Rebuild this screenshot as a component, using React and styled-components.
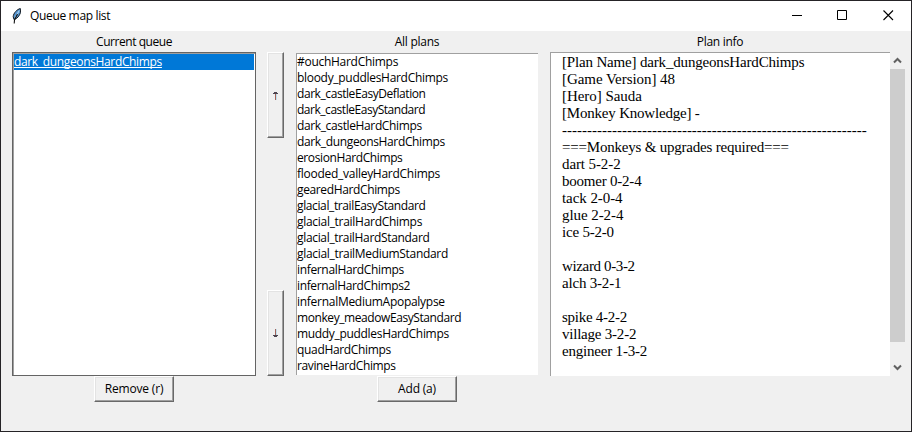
import React from "react";
import styled, { createGlobalStyle } from "styled-components";

const Global = createGlobalStyle`
  * { box-sizing: border-box; }
  body { margin: 0; overflow: hidden; background: #222; }
`;
const Window = styled.div`
  width: 912px; height: 432px; padding: 1px; background: #252326;
  display: flex; flex-direction: column; color: #000;
  font: 12px/16px "Open Sans", "Noto Sans", sans-serif; letter-spacing: -0.18px;
`;
const TitleBar = styled.header`
  height: 30px; background: #fff; display: flex; align-items: center; flex: none; padding-left: 9px;
`;
const Title = styled.span`
  margin-left: 6px; flex: 1; letter-spacing: -0.34px;
`;
const Control = styled.div`
  width: ${(p) => p.$w ?? 46}px; height: 30px; display: grid; place-items: center; padding-bottom: 2px;
`;
const MaximizeControl = styled(Control)`
  padding-right: 2px;
`;
const Body = styled.main`
  flex: 1; background: #f0f0f0; display: flex; align-items: flex-start; padding: 3px 0 0 11px;
`;
const Column = styled.section`
  display: flex; flex-direction: column; align-items: center; width: ${(p) => p.$w}px; margin-right: ${(p) => p.$gap}px;
`;
const Heading = styled.h2`
  margin: 0; font: inherit; height: 18px; line-height: 16px; letter-spacing: ${(p) => p.$ls}px;
`;
const ListBox = styled.ul`
  list-style: none; margin: 0; width: 100%; height: 324px; background: #fff; overflow: hidden;
  border: 1px solid #646464; box-shadow: inset 1px 1px #a0a0a0;
  padding: 1px;
`;
const PlanList = styled.ul`
  list-style: none; margin: 1px 0; width: 100%; height: 322px; background: #fff; overflow: hidden;
  border: solid #a0a0a0; border-width: 1px 0 0 1px; padding: 0;
`;
const Row = styled.li`
  height: 16px; white-space: pre; letter-spacing: ${(p) => p.$ls}px;
`;
const SelectedRow = styled(Row)`
  background: #0078d7; color: #fff; text-decoration: underline; text-underline-offset: 1px;
  text-decoration-thickness: 1px; text-decoration-skip-ink: none;
`;
const Button = styled.button`
  border: 1px solid; border-color: #fff #696969 #696969 #fff; border-radius: 0; padding: 0;
  box-shadow: inset -1px -1px #a0a0a0, inset 1px 1px #e3e3e3;
  background: #f0f0f0; color: #000; font: inherit; letter-spacing: inherit;
  width: ${(p) => p.$w}px; height: ${(p) => p.$h}px; display: grid; place-items: center;
`;
const Movers = styled.div`
  width: 17px; height: 324px; margin: 18px 12px 0 11px; display: flex; flex-direction: column; justify-content: space-between;
`;
const InfoFrame = styled.div`
  display: flex; height: 324px;
`;
const InfoColumn = styled.div`
  display: flex;
`;
const Info = styled.div`
  width: 340px; background: #fff; border: solid #a0a0a0; border-width: 1px 0 0 1px;
  padding: 1px 0 0 11px; font: 15px/17px "Liberation Serif", "Times New Roman", serif;
`;
const InfoLine = styled.div`
  height: 17px; white-space: pre; letter-spacing: ${(p) => p.$ls}px;
`;
const Scrollbar = styled.div`
  width: 15px; height: 324px; margin-top: 18px; display: flex; flex-direction: column; align-items: center;
`;
const ScrollArrow = styled.div`
  height: 17px; width: 15px; display: grid; place-items: center;
`;
const Thumb = styled.div`
  width: 15px; height: 273px; background: #cdcdcd; margin-bottom: 17px;
`;

const plans = [
  ["#ouchHardChimps", -0.28], ["bloody_puddlesHardChimps", -0.3], ["dark_castleEasyDeflation", -0.43],
  ["dark_castleEasyStandard", -0.47], ["dark_castleHardChimps", -0.37], ["dark_dungeonsHardChimps", -0.35],
  ["erosionHardChimps", -0.39], ["flooded_valleyHardChimps", -0.27], ["gearedHardChimps", -0.37],
  ["glacial_trailEasyStandard", -0.38], ["glacial_trailHardChimps", -0.29], ["glacial_trailHardStandard", -0.33],
  ["glacial_trailMediumStandard", -0.31], ["infernalHardChimps", -0.34], ["infernalHardChimps2", -0.36],
  ["infernalMediumApopalypse", -0.28], ["monkey_meadowEasyStandard", -0.42], ["muddy_puddlesHardChimps", -0.32],
  ["quadHardChimps", -0.33], ["ravineHardChimps", -0.37],
];
const info = [
  ["[Plan Name] dark_dungeonsHardChimps", -0.17], ["[Game Version] 48", -0.05], ["[Hero] Sauda", -0.04],
  ["[Monkey Knowledge] -", -0.2], ["-".repeat(61), 0], ["===Monkeys & upgrades required===", -0.21],
  ["dart 5-2-2", -0.1], ["boomer 0-2-4", -0.22], ["tack 2-0-4", -0.07], ["glue 2-2-4", -0.07], ["ice 5-2-0", -0.2],
  ["", 0], ["wizard 0-3-2", -0.36], ["alch 3-2-1", -0.2], ["", 0],
  ["spike 4-2-2", -0.26], ["village 3-2-2", -0.22], ["engineer 1-3-2", -0.2],
];

const Feather = () => (
  <svg width="14" height="16" viewBox="0 0 14 16">
    <path d="M10.300 .5C7.200 1.300 3.400 5 3.200 8.700L4 11.500C7.500 10.800 9.500 7.500 10.500 4.500Z" fill="#5595d0" stroke="#111820" strokeWidth="1" />
    <path d="M9.300 2.500L5.200 9.500" stroke="#b5d9f5" strokeWidth="1" />
    <path d="M7.500 6L4.500 12L4.200 15.500" fill="none" stroke="#111" strokeWidth="1.100" />
  </svg>
);
const Chevron = ({ down }) => (
  <svg width="9" height="7" viewBox="0 0 9 7">
    <path d={down ? "M1 1.500L4.500 5L8 1.500" : "M1 5.500L4.500 2L8 5.500"} fill="none" stroke="#606060" strokeWidth="2" />
  </svg>
);
const Arrow = ({ down }) => (
  <svg width="5" height="9" viewBox="0 0 5 9" shapeRendering="crispEdges">
    <path d={down ? "M2 0h1v8h-1z" : "M2 1h1v8h-1z"} fill="#a3645a" />
    <path d={down ? "M3 0h1v6h-1z" : "M3 3h1v6h-1z"} fill="#bfe0ee" />
    <path d={down ? "M0 6h5v1h-5zM1 7h3v1h-3z" : "M0 2h5v1h-5zM1 1h3v1h-3z"} fill="#4d4550" />
  </svg>
);

export default function App() {
  return (
    <Window>
      <Global />
      <TitleBar>
        <Feather />
        <Title>Queue map list</Title>
        <Control><svg width="10" height="10" shapeRendering="crispEdges"><path d="M0 5h10v1H0z" /></svg></Control>
        <MaximizeControl><svg width="10" height="10"><path d="M.5.5h9v9h-9z" fill="none" stroke="#000" /></svg></MaximizeControl>
        <Control $w={45}><svg width="11" height="11"><path d="M.5.5l9.500 9.500M10 .5l-9.500 9.500" stroke="#000" strokeWidth="1.100" /></svg></Control>
      </TitleBar>
      <Body>
        <Column $w={244} $gap={0}>
          <Heading $ls={-0.45}>Current queue</Heading>
          <ListBox><SelectedRow $ls={-0.35}>dark_dungeonsHardChimps</SelectedRow></ListBox>
          <Button $w={80} $h={26}>Remove (r)</Button>
        </Column>
        <Movers>
          <Button $w={17} $h={86} aria-label="Move up"><Arrow /></Button>
          <Button $w={17} $h={86} aria-label="Move down"><Arrow down /></Button>
        </Movers>
        <Column $w={242} $gap={12}>
          <Heading $ls={-0.25}>All plans</Heading>
          <PlanList>{plans.map(([t, ls]) => <Row key={t} $ls={ls}>{t}</Row>)}</PlanList>
          <Button $w={80} $h={26}>Add (a)</Button>
        </Column>
        <InfoColumn>
          <Column $w={340} $gap={0}>
            <Heading $ls={-0.3}>Plan info</Heading>
            <InfoFrame>
              <Info>{info.map(([t, ls], i) => <InfoLine key={i} $ls={ls}>{t}</InfoLine>)}</Info>
            </InfoFrame>
          </Column>
          <Scrollbar>
            <ScrollArrow><Chevron /></ScrollArrow>
            <Thumb />
            <ScrollArrow><Chevron down /></ScrollArrow>
          </Scrollbar>
        </InfoColumn>
      </Body>
    </Window>
  );
}
